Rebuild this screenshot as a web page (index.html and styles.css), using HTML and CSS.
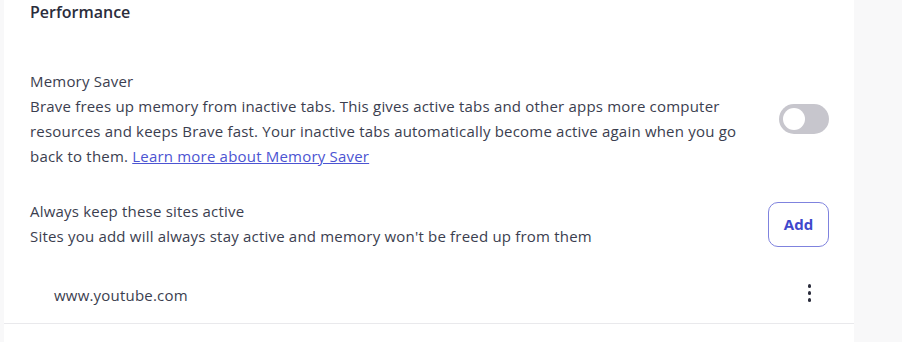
FILE: index.html
```html
<!DOCTYPE html>
<html lang="en">
<head>
<meta charset="utf-8">
<title>Performance</title>
<link rel="stylesheet" href="styles.css">
</head>
<body>
<div class="page">
  <div class="card">
    <h2 class="title">Performance</h2>
    <div class="row row-saver">
      <div class="text">
        <div class="label">Memory Saver</div>
        <div class="sub">Brave frees up memory from inactive tabs. This gives active tabs and other apps more computer resources and keeps Brave fast. Your inactive tabs automatically become active again when you go back to them. <a class="link" href="#">Learn more about Memory Saver</a></div>
      </div>
      <div class="toggle"><span class="knob"></span></div>
    </div>
    <div class="row row-sites">
      <div class="text">
        <div class="label">Always keep these sites active</div>
        <div class="sub">Sites you add will always stay active and memory won't be freed up from them</div>
      </div>
      <button class="add">Add</button>
    </div>
    <div class="site">
      <span class="site-name">www.youtube.com</span>
      <span class="kebab"><i></i><i></i><i></i></span>
    </div>
  </div>
</div>
</body>
</html>
```

FILE: styles.css
```css
html, body {
  margin: 0;
  padding: 0;
  background: #f8f8f9;
  height: 100%;
}
.page {
  display: flex;
  height: 342px;
  padding-left: 4px;
}
.card {
  width: 850px;
  background: #ffffff;
  font-family: "Open Sans", "Noto Sans", sans-serif;
  font-size: 15px;
  letter-spacing: 0.2px;
  color: #3b3e4f;
  display: flex;
  flex-direction: column;
}
.title {
  margin: 0;
  padding: 0 0 0 26px;
  font-size: 16px;
  font-weight: 600;
  letter-spacing: 0;
  line-height: 24px;
  color: #2b2d3c;
}
.row {
  display: flex;
  align-items: center;
  padding: 0 25px 0 26px;
}
.row-saver {
  margin-top: 45px;
}
.row-sites {
  margin-top: 30px;
}
.text {
  flex: 1;
  line-height: 25px;
  padding-right: 40px;
}
.link {
  color: #4c54d2;
  text-decoration: underline;
}
.toggle {
  width: 50px;
  height: 30px;
  border-radius: 15px;
  background: #c7c6cd;
  display: flex;
  align-items: center;
  padding-left: 4px;
  box-sizing: border-box;
}
.knob {
  width: 22px;
  height: 22px;
  border-radius: 50%;
  background: #ffffff;
}
.add {
  width: 61px;
  height: 45px;
  border: 1px solid #7f83de;
  border-radius: 10px;
  background: #ffffff;
  color: #3f48cc;
  font-family: "Open Sans", "Noto Sans", sans-serif;
  font-size: 15px;
  font-weight: 700;
  padding: 0;
}
.site {
  display: flex;
  align-items: center;
  justify-content: space-between;
  margin-top: 24px;
  padding: 0 43px 7px 50px;
  height: 51px;
  box-sizing: border-box;
  border-bottom: 1px solid #e9e9ec;
}
.kebab {
  display: flex;
  flex-direction: column;
  gap: 3.5px;
  margin-bottom: 3px;
}
.kebab i {
  display: block;
  width: 3.5px;
  height: 3.5px;
  border-radius: 50%;
  background: #2b2d3c;
}
```
